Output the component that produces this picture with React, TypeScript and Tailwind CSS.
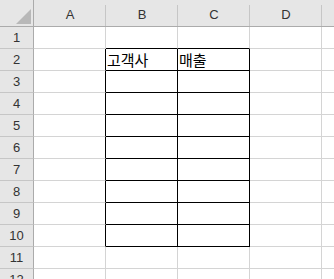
import React from 'react';

const cols = ['A', 'B', 'C', 'D', 'E'];
const rows = Array.from({ length: 12 }, (_, i) => i + 1);

const data: Record<string, string> = {
  B2: '고객사',
  C2: '매출',
};

// black border box B2:C10
function inTable(col: string, row: number) {
  return (col === 'B' || col === 'C') && row >= 2 && row <= 10;
}

function cellBorders(col: string, row: number) {
  const right =
    inTable(col, row) || (col === 'A' && row >= 2 && row <= 10)
      ? 'border-r-black'
      : 'border-r-[#d4d4d4]';
  const bottom =
    inTable(col, row) || ((col === 'B' || col === 'C') && row === 1)
      ? 'border-b-black'
      : 'border-b-[#d4d4d4]';
  return `${right} ${bottom}`;
}

function CornerCell() {
  return (
    <div className="relative bg-[#e6e6e6] border-r border-b border-r-[#ababab] border-b-[#ababab]">
      <svg width="15" height="15" viewBox="0 0 15 15" className="absolute left-[16px] top-[9px]">
        <polygon points="15,0 15,15 0,15" fill="#b8b8b8" />
      </svg>
    </div>
  );
}

function ColHeader({ label, last }: { label: string; last?: boolean }) {
  return (
    <div className="relative flex items-center justify-center bg-[#e6e6e6] border-b border-b-[#ababab] pt-[3px] text-[13px] text-[#333]">
      {label}
      {!last && <span className="absolute right-0 top-[5px] bottom-0 w-px bg-[#c6c6c6]" />}
    </div>
  );
}

export default function App() {
  return (
    <div
      className="w-[334px] h-[279px] overflow-hidden bg-white"
      style={{ fontFamily: '"Liberation Sans", Arial, sans-serif' }}
    >
      <div className="grid grid-cols-[34px_72px_72px_72px_72px_72px] grid-rows-[27px_repeat(12,22px)]">
        <CornerCell />
        {cols.map((c, i) => (
          <ColHeader key={c} label={c} last={i === cols.length - 1} />
        ))}
        {rows.map((r) => (
          <React.Fragment key={r}>
            <div className="flex items-center justify-center bg-[#e6e6e6] border-r border-b border-r-[#ababab] border-b-[#c6c6c6] pt-[1px] text-[13px] text-[#333]">
              {r}
            </div>
            {cols.map((c) => (
              <div
                key={c + r}
                className={`flex items-end border-r border-b pl-[1px] pb-[1px] text-[15px] leading-[19px] text-black ${cellBorders(c, r)}`}
                style={{ fontFamily: '"Noto Sans CJK KR", "Noto Sans", sans-serif' }}
              >
                {data[c + r] ?? ''}
              </div>
            ))}
          </React.Fragment>
        ))}
      </div>
    </div>
  );
}
